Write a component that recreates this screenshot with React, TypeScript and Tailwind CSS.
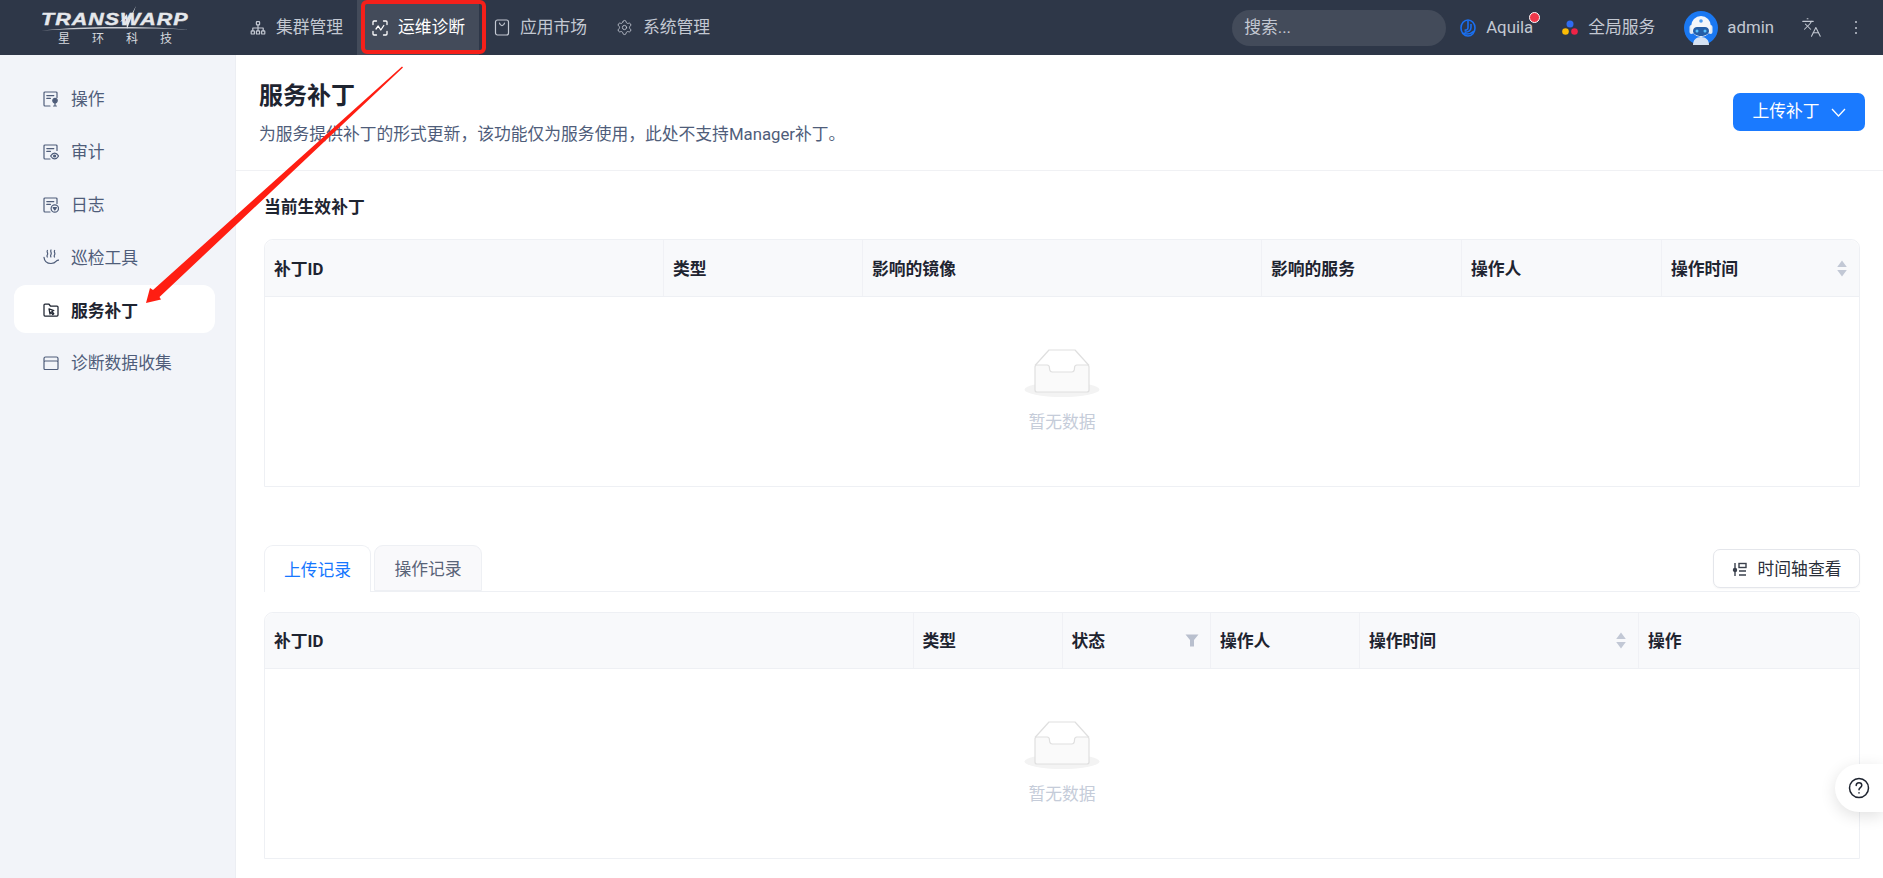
import React from "react";
import { Settings, Languages } from "lucide-react";

const stroke = { fill: "none", stroke: "currentColor", strokeWidth: 1.2, strokeLinecap: "round" as const, strokeLinejoin: "round" as const };

const Tree = () => (
  <svg width="16" height="16" viewBox="0 0 16 16" {...stroke}>
    <rect x="6.4" y="1.6" width="3.2" height="3.2" rx=".6" />
    <rect x="1.2" y="10.8" width="3.2" height="3.2" rx=".6" />
    <rect x="6.4" y="10.8" width="3.2" height="3.2" rx=".6" />
    <rect x="11.6" y="10.8" width="3.2" height="3.2" rx=".6" />
    <path d="M8 4.8v6M2.8 10.8V8h10.4v2.8" />
  </svg>
);
const Scan = () => (
  <svg width="16" height="16" viewBox="0 0 16 16" {...stroke} strokeWidth={1.3}>
    <path d="M1 4.5V2a1 1 0 0 1 1-1h2.5M11.5 1H14a1 1 0 0 1 1 1v2.5M15 11.5V14a1 1 0 0 1-1 1h-2.5M4.5 15H2a1 1 0 0 1-1-1v-2.5" />
    <path d="M4 9l2.2-3 2.6 4 3-4.5" />
  </svg>
);
const Bag = () => (
  <svg width="16" height="17" viewBox="0 0 16 17" {...stroke}>
    <rect x="1.5" y="1" width="13" height="15" rx="2" />
    <path d="M5.5 4.2c.4 1.6 1.3 2.4 2.5 2.4s2.1-.8 2.5-2.4" />
  </svg>
);

const Doc = ({ children }: { children: React.ReactNode }) => (
  <svg width="16" height="16" viewBox="0 0 16 16" {...stroke}>
    <path d="M14 6.5V2a1 1 0 0 0-1-1H2a1 1 0 0 0-1 1v12a1 1 0 0 0 1 1h5" />
    <path d="M3.8 4.6h7M3.8 7.4h3.6" />
    {children}
  </svg>
);
const IconOp = () => (
  <Doc>
    <circle cx="12" cy="9.6" r="2.2" fill="currentColor" />
    <path d="M12 11v4M10.6 15h2.8" />
  </Doc>
);
const IconAudit = () => (
  <Doc>
    <path d="M7.6 12c1.4-2.2 2.8-2.9 4-2.9s2.7.7 4 2.9c-1.3 2.1-2.7 2.9-4 2.9s-2.6-.8-4-2.9z" />
    <circle cx="11.6" cy="12" r="1" fill="currentColor" />
  </Doc>
);
const IconLog = () => (
  <Doc>
    <circle cx="11.8" cy="11.5" r="3.7" />
    <path d="M10.2 10.6h3.2L11.8 13z" fill="currentColor" />
  </Doc>
);
const IconHand = () => (
  <svg width="16" height="16" viewBox="0 0 16 16" {...stroke}>
    <path d="M4.4 1.5c-1 1.5 1 2.6 0 4.2-.5.8-.5 1.5-.1 2.3M8 1c-1 1.6 1 2.9 0 4.5-.5.8-.5 1.6-.1 2.5M11.6 1.5c-1 1.5 1 2.6 0 4.2-.5.8-.5 1.5-.1 2.3" />
    <path d="M1 8.400c.4 3.700 3.200 6.100 7 6.100 2.200 0 4.100-.8 5.300-2.300.8-1 1.900-1.300 2.700-1.100" />
  </svg>
);
const IconFolder = () => (
  <svg width="16" height="16" viewBox="0 0 16 16" {...stroke} strokeWidth={1.25}>
    <path d="M1 3a1 1 0 0 1 1-1h3.800l1.600 2H14a1 1 0 0 1 1 1v8a1 1 0 0 1-1 1H2a1 1 0 0 1-1-1z" />
    <path d="M6 6.800l4.800 1.700-2 .9 2 2.300-1 .8-2-2.200-.8 1.800z" />
  </svg>
);
const IconBox = () => (
  <svg width="16" height="16" viewBox="0 0 16 16" {...stroke}>
    <path d="M1 6V3.500A1.500 1.500 0 0 1 2.500 2h11A1.500 1.500 0 0 1 15 3.500V6" />
    <rect x="1" y="6" width="14" height="8.500" rx="1" />
  </svg>
);

const Sort = () => (
  <svg width="12" height="17" viewBox="0 0 12 17" fill="#c2c8d5">
    <path d="M6 .5l4.800 6.500H1.200zM6 16.500L1.200 10h9.600z" />
  </svg>
);
const Funnel = () => (
  <svg width="14" height="13" viewBox="0 0 14 13" fill="#b9c0ce">
    <path d="M.5.500h13L9 6v6.500H5V6z" />
  </svg>
);

const Empty = () => (
  <div className="flex flex-col items-center gap-[12px]">
    <svg width="76" height="49" viewBox="0 0 76 49">
      <ellipse cx="38" cy="40.500" rx="37.500" ry="7.500" fill="#f3f3f3" />
      <path d="M11 16.500L25 1h26l14 15.500" fill="#fff" stroke="#dfdfdf" strokeWidth="1.200" strokeLinejoin="round" />
      <path d="M11 18a2 2 0 0 1 2-2h10c2 0 2.500 1 2.500 3s1 4 3 4h19c2 0 3-2 3-4s.5-3 2.500-3h10a2 2 0 0 1 2 2v23a2 2 0 0 1-2 2H13a2 2 0 0 1-2-2z" fill="#fafafa" stroke="#dfdfdf" strokeWidth="1.200" />
    </svg>
    <div className="text-[16.8px] leading-[24px] text-[#c5ccd9]">暂无数据</div>
  </div>
);

type Col = { t: string; sort?: boolean; filter?: boolean };
const Table = ({ cols, grid, className, head }: { cols: Col[]; grid: string; className: string; head: string }) => (
  <div className={`border border-[#eef0f4] rounded-t-[9px] ${className}`}>
    <div className={`grid ${grid} ${head} bg-[#f8f9fb] rounded-t-[9px] border-b border-[#eef0f4]`}>
      {cols.map((c, i) => (
        <div
          key={c.t}
          className={`flex items-center justify-between pl-[9px] pr-[11px] text-[16.8px] font-bold text-[#1e2430] ${i < cols.length - 1 ? "border-r border-[#f0f1f5]" : ""}`}
        >
          <span className="pt-[3px]">{c.t}</span>
          {c.sort && <Sort />}
          {c.filter && <Funnel />}
        </div>
      ))}
    </div>
    <div className="h-[189px] flex items-center justify-center">
      <Empty />
    </div>
  </div>
);

const navItems = [
  { t: "集群管理", i: <Tree /> },
  { t: "运维诊断", i: <Scan />, active: true },
  { t: "应用市场", i: <Bag /> },
  { t: "系统管理", i: <Settings size={17} strokeWidth={1.2} /> },
];

const sideItems = [
  { t: "操作", i: <IconOp /> },
  { t: "审计", i: <IconAudit /> },
  { t: "日志", i: <IconLog /> },
  { t: "巡检工具", i: <IconHand /> },
  { t: "服务补丁", i: <IconFolder />, active: true },
  { t: "诊断数据收集", i: <IconBox /> },
];

export default function App() {
  return (
    <div className="relative h-[878px] w-full overflow-hidden bg-white font-[Roboto,'Noto_Sans_CJK_SC',sans-serif]">
      <header className="flex h-[55px] items-center bg-[#2e3748] text-[#c3c8d2]">
        <div className="flex h-full w-[235px] shrink-0 pl-[41px]">
          <div className="relative h-full w-[148px] text-[#e6e8ec]">
            <div className="absolute left-0 top-[9px] origin-left scale-x-[1.3] text-[16.5px] leading-[20px] font-bold italic tracking-[0.8px] font-['Liberation_Sans',sans-serif] whitespace-nowrap [-webkit-text-stroke:0.4px_#e6e8ec]">
              TRANSWARP
            </div>
            <svg className="absolute left-0 top-[5px]" width="148" height="26" viewBox="0 0 148 26">
              <path d="M0 25.500c30-3 60-4 82-3.500 24 0 50 1 66 3-20-2-46-1.500-66-1.500-24 0-52 .5-82 2z" fill="#c9ccd2" />
              <path d="M95 1l-9 23-1-10-6 3 7-8 1 7z" fill="#e6e8ec" />
            </svg>
            <div className="absolute left-[17px] top-[32px] flex w-[114px] justify-between text-[12px] leading-[14px] text-[#d5d8de]">
              <span>星</span><span>环</span><span>科</span><span>技</span>
            </div>
          </div>
        </div>
        <nav className="flex h-full">
          {navItems.map((n) => (
            <div
              key={n.t}
              className={`flex h-full w-[122px] items-center gap-[10px] pl-[15px] text-[16.8px] ${n.active ? "bg-[#434b5a] text-white" : ""}`}
            >
              {n.i}
              <span>{n.t}</span>
            </div>
          ))}
        </nav>
        <div className="ml-auto flex items-center pr-[26px]">
          <div className="flex h-[36px] w-[214px] items-center rounded-[18px] bg-[#434b5a] pl-[12px] text-[16.8px] text-[#c3c8d2]">搜索...</div>
          <div className="relative ml-[14px] flex items-center gap-[10px] text-[16.8px]">
            <svg width="16" height="18" viewBox="0 0 16 18" fill="none" stroke="#1a6ff0" strokeWidth="1.600">
              <ellipse cx="8" cy="9" rx="7" ry="8" />
              <path d="M8 1.500v7c0 2-1.500 3-3.500 2.500M11 5v3.500c0 3-3 5-6.500 4.500M2 14c4 1.500 9 1 12-2" />
            </svg>
            <span>Aquila</span>
            <span className="absolute right-[-7px] top-[-3px] h-[11px] w-[11px] rounded-full border border-white bg-[#f0384a]" />
          </div>
          <div className="ml-[29px] flex items-center gap-[10px] text-[16.8px]">
            <svg width="16" height="16" viewBox="0 0 16 16">
              <circle cx="8" cy="4" r="3.500" fill="#2f6bf0" />
              <circle cx="3.500" cy="11.500" r="3.300" fill="#fbbc05" />
              <circle cx="12.500" cy="11.500" r="3.300" fill="#ef2346" />
            </svg>
            <span>全局服务</span>
          </div>
          <div className="ml-[29px] flex items-center gap-[9px] text-[16.8px]">
            <svg width="34" height="34" viewBox="0 0 34 34">
              <circle cx="17" cy="17" r="17" fill="#1a78f2" />
              <path d="M9 34c0-5 3-8 8-8s8 3 8 8z" fill="#dfe8f2" opacity=".95" />
              <rect x="5.500" y="14" width="4" height="9" rx="2" fill="#dfe8f2" />
              <rect x="24.500" y="14" width="4" height="9" rx="2" fill="#dfe8f2" />
              <ellipse cx="17" cy="15.500" rx="10" ry="10.500" fill="#f2f5fa" />
              <path d="M9 20c0-2.500 2-4 4-4h8c2 0 4 1.500 4 4s-3 5-8 5-8-2.500-8-5z" fill="#235ea8" />
              <circle cx="13" cy="20" r="1.500" fill="#59c1ff" />
              <circle cx="21" cy="20" r="1.500" fill="#59c1ff" />
              <circle cx="17" cy="10" r="1.800" fill="#4a9af0" />
            </svg>
            <span>admin</span>
          </div>
          <Languages className="ml-[27px]" size={21} strokeWidth={1.200} />
          <div className="ml-[33px] flex flex-col gap-[3.500px]">
            <span className="h-[2px] w-[2px] rounded-full bg-[#c3c8d2]" />
            <span className="h-[2px] w-[2px] rounded-full bg-[#c3c8d2]" />
            <span className="h-[2px] w-[2px] rounded-full bg-[#c3c8d2]" />
          </div>
        </div>
      </header>

      <div className="flex h-[823px]">
        <aside className="flex w-[236px] shrink-0 flex-col gap-[4.8px] border-r border-[#eceef3] bg-[#f2f4f9] pt-[19px] pl-[14px] pr-[20px]">
          {sideItems.map((s) => (
            <div
              key={s.t}
              className={`flex h-[48px] items-center gap-[12px] rounded-[12px] pl-[29px] text-[16.8px] ${s.active ? "bg-white font-bold text-[#1e2430]" : "text-[#4f5d7a]"}`}
            >
              <span className="pt-[2px]">{s.i}</span>
              <span className="pt-[4px]">{s.t}</span>
            </div>
          ))}
        </aside>

        <main className="min-w-0 flex-1">
          <div className="flex h-[116px] items-start justify-between border-b border-[#f0f1f4] pl-[23px] pr-[18px]">
            <div className="pt-[24px]">
              <h1 className="text-[24px] leading-[34px] font-bold text-[#1e2430]">服务补丁</h1>
              <p className="mt-[9px] text-[16.8px] leading-[24px] text-[#4f5d7a]">为服务提供补丁的形式更新，该功能仅为服务使用，此处不支持Manager补丁。</p>
            </div>
            <button className="mt-[38px] flex h-[38px] w-[132px] items-center justify-center gap-[11px] rounded-[7px] bg-[#1a7aff] text-[16.8px] text-white">
              上传补丁
              <svg width="15" height="9" viewBox="0 0 15 9" fill="none" stroke="white" strokeWidth="1.300">
                <path d="M1 1l6.500 7L14 1" />
              </svg>
            </button>
          </div>

          <div className="pl-[28px] pr-[23px]">
            <h2 className="mt-[24px] text-[16.8px] leading-[24px] font-bold text-[#1e2430]">当前生效补丁</h2>
            <Table
              className="mt-[20px]"
              head="h-[57px]"
              grid="grid-cols-[399px_199px_399px_200px_200px_1fr]"
              cols={[
                { t: "补丁ID" },
                { t: "类型" },
                { t: "影响的镜像" },
                { t: "影响的服务" },
                { t: "操作人" },
                { t: "操作时间", sort: true },
              ]}
            />

            <div className="mt-[58px] flex h-[47px] items-end justify-between border-b border-[#eef0f4]">
              <div className="flex gap-[3px]">
                <div className="-mb-px flex h-[47px] w-[107px] items-center justify-center rounded-t-[9px] border border-b-0 border-[#eef0f4] bg-white pt-[3px] text-[16.8px] text-[#1677ff]">上传记录</div>
                <div className="flex h-[46px] w-[108px] items-center justify-center rounded-t-[9px] border border-[#eef0f4] bg-[#f9f9fb] pt-[3px] text-[16.8px] text-[#5a6478]">操作记录</div>
              </div>
              <button className="mb-[3px] flex h-[39px] w-[147px] items-center justify-center gap-[11px] rounded-[7px] border border-[#e4e6eb] bg-white pt-[2px] text-[16.8px] text-[#2a2f3a] shadow-[0_1px_2px_rgba(0,0,0,0.04)]">
                <svg width="15" height="15" viewBox="0 0 15 15" fill="none" stroke="#3a404c" strokeWidth="1.400">
                  <path d="M3 1v13" />
                  <circle cx="3" cy="8" r="1.500" fill="#3a404c" />
                  <rect x="7" y="1.500" width="7" height="4" />
                  <path d="M7 9h7M7 13h7" />
                </svg>
                时间轴查看
              </button>
            </div>

            <Table
              className="mt-[20px]"
              head="h-[56px]"
              grid="grid-cols-[648.5px_149px_148.5px_149px_279px_1fr]"
              cols={[
                { t: "补丁ID" },
                { t: "类型" },
                { t: "状态", filter: true },
                { t: "操作人" },
                { t: "操作时间", sort: true },
                { t: "操作" },
              ]}
            />
          </div>
        </main>
      </div>

      {/* help bubble */}
      <div className="absolute right-0 top-[764px] flex h-[48px] w-[48px] items-center justify-center rounded-l-[24px] bg-white shadow-[0_4px_16px_rgba(0,0,0,0.12)]">
        <svg width="22" height="22" viewBox="0 0 22 22" fill="none" stroke="#1e2430" strokeWidth="1.500" strokeLinecap="round">
          <circle cx="11" cy="11" r="9.500" />
          <path d="M8.200 8.500c0-1.700 1.300-2.800 2.800-2.800s2.800 1.100 2.800 2.600c0 2.200-2.800 2.300-2.800 4.400" />
          <path d="M11 15.800v.2" />
        </svg>
      </div>

      {/* red annotations */}
      <div className="pointer-events-none absolute left-[361px] top-0 h-[54px] w-[125px] rounded-[6px] border-[4px] border-[#f5201a]" />
      <svg className="pointer-events-none absolute left-0 top-0" width="1883" height="878">
        <polygon points="402,66.500 403,67.500 159.500,297 161,299.500 146,303 150,288 153,290" fill="#ff1e12" />
      </svg>
    </div>
  );
}
